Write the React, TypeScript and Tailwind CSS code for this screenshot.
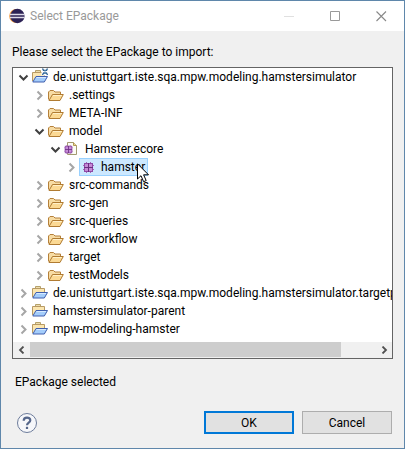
import { useState } from "react";

type IconKind = "javaProject" | "project" | "folder" | "file" | "package";

interface Node {
  label: string;
  level: 0 | 1 | 2 | 3;
  icon: IconKind;
  open?: boolean;
}

const nodes: Node[] = [
  { label: "de.unistuttgart.iste.sqa.mpw.modeling.hamstersimulator", level: 0, icon: "javaProject", open: true },
  { label: ".settings", level: 1, icon: "folder" },
  { label: "META-INF", level: 1, icon: "folder" },
  { label: "model", level: 1, icon: "folder", open: true },
  { label: "Hamster.ecore", level: 2, icon: "file", open: true },
  { label: "hamster", level: 3, icon: "package" },
  { label: "src-commands", level: 1, icon: "folder" },
  { label: "src-gen", level: 1, icon: "folder" },
  { label: "src-queries", level: 1, icon: "folder" },
  { label: "src-workflow", level: 1, icon: "folder" },
  { label: "target", level: 1, icon: "folder" },
  { label: "testModels", level: 1, icon: "folder" },
  { label: "de.unistuttgart.iste.sqa.mpw.modeling.hamstersimulator.targetp", level: 0, icon: "project" },
  { label: "hamstersimulator-parent", level: 0, icon: "project" },
  { label: "mpw-modeling-hamster", level: 0, icon: "project" },
];

const indents = ["pl-0.5", "pl-[18px]", "pl-[34px]", "pl-[50px]"];

function Chevron({ open }: { open?: boolean }) {
  return (
    <svg viewBox="0 0 16 16" className="size-4" fill="none" strokeWidth="2">
      {open ? <path d="M4.5 6.5 8.5 10.5 12.5 6.5" stroke="#404040" /> : <path d="M6.5 4.5 10.5 8.5 6.5 12.5" stroke="#a6a6a6" />}
    </svg>
  );
}

function EcoreGlyph({ x, y }: { x: number; y: number }) {
  return (
    <g transform={`translate(${x} ${y})`}>
      <path d="M3.5 0V11M7.5 0V11M0 3.5H11M0 7.5H11" stroke="#a566ba" />
      <rect x="1.5" y="1.5" width="8" height="8" fill="#c58ad6" stroke="#8f4ba6" />
      <path d="M5.5 1V10M1 5.5H10" stroke="#6b2c80" />
    </g>
  );
}

function NodeIcon({ kind }: { kind: IconKind }) {
  if (kind === "folder") {
    return (
      <svg viewBox="0 0 16 16" className="size-4 shrink-0" fill="none" strokeLinejoin="round">
        <path d="M.5 12.5V5L2 3.5H5.5L7 5H12.5V8" fill="#f7dca4" stroke="#b5803a" />
        <path d="M1 13.5 4.5 7.5H15.3L12 13.5Z" fill="#fbd994" stroke="#b07b32" />
        <path d="M5 8.5H13.8" stroke="#fff0c8" />
      </svg>
    );
  }
  if (kind === "project" || kind === "javaProject") {
    return (
      <svg viewBox="0 0 16 16" className="size-4 shrink-0 overflow-visible" fill="none" strokeLinejoin="round">
        <path d="M3.5 4V1.5H8.5V4" fill="#eddcae" stroke="#b5a16a" />
        <path d="M.5 12V3.5H12.5V8" fill="#fbe6b0" stroke="#b89a64" />
        <path d="M.8 13 4 7.5H15.5L12.3 13Z" fill="#a4cdfb" stroke="#405fae" />
        <path d="M4.6 8.5H14" stroke="#d6eaff" />
        {kind === "javaProject" && (
          <>
            <path d="M9.5-1H16V6.5H9.5Z" fill="#fff" />
            <path d="M10.5-.5 11.5 1.4H14.5L15.5-.5M10.5 6 11.5 4H14.5L15.5 6" stroke="#285f91" strokeWidth="1.3" />
            <path d="M13 1V4.2" stroke="#6c9bc4" />
          </>
        )}
      </svg>
    );
  }
  if (kind === "file") {
    return (
      <svg viewBox="0 0 16 16" className="size-4 shrink-0" fill="none">
        <path d="M3.5 1.5H9.5L12.5 4.5V13.5H3.5Z" fill="#fcfcf5" stroke="#a39a70" />
        <path d="M9.5 1.5V4.5H12.5" fill="#eed796" stroke="#b39853" />
        <g transform="translate(0 4) scale(.82)">
          <EcoreGlyph x={0} y={0} />
        </g>
      </svg>
    );
  }
  return (
    <svg viewBox="0 0 16 16" className="size-4 shrink-0">
      <EcoreGlyph x={3} y={3} />
    </svg>
  );
}

function EclipseLogo() {
  return (
    <svg viewBox="0 0 16 16" className="size-4">
      <circle cx="7.2" cy="8" r="7" fill="#f49a3c" />
      <circle cx="8.4" cy="8" r="7.2" fill="#2c2255" />
      <path d="M1 6.5H15.4M1 9.5H15.4" stroke="#dedbea" strokeWidth="1.6" />
    </svg>
  );
}

function Pointer() {
  return (
    <svg viewBox="0 0 13 20" className="pointer-events-none absolute top-1 left-[57px] z-10 h-5 w-[13px]">
      <path d="M.5.8V16L4 12.7 6.6 18.7 9.2 17.6 6.6 11.8H11.5Z" fill="#fff" stroke="#000" />
    </svg>
  );
}

export default function App() {
  const [selected, setSelected] = useState("hamster");

  return (
    <main className="flex min-h-screen flex-col border border-[#5f87ab] bg-[#f0f0f0] font-['Roboto','Open_Sans',sans-serif] text-xs text-black">
      <header className="flex h-[30px] items-center bg-white pl-2 text-[#999]">
        <EclipseLogo />
        <h1 className="ml-[5px] flex-1">Select EPackage</h1>
        <div className="flex">
          <button aria-label="Minimize" disabled className="flex h-[30px] w-[46px] items-center justify-center">
            <svg viewBox="0 0 11 11" className="size-[11px]"><path d="M0 5.5H10" stroke="#e0e0e0" /></svg>
          </button>
          <button aria-label="Maximize" className="flex h-[30px] w-[46px] items-center justify-center">
            <svg viewBox="0 0 11 11" className="size-[11px]"><path d="M.5.5H9.5V9.5H.5Z" fill="none" stroke="#999" /></svg>
          </button>
          <button aria-label="Close" className="flex h-[30px] w-[46px] items-center justify-center">
            <svg viewBox="0 0 11 11" className="size-[11px]"><path d="M.5.5 10 10M10 .5.5 10" stroke="#888" strokeWidth="1.1" /></svg>
          </button>
        </div>
      </header>

      <section className="flex flex-1 flex-col px-[11px] pt-3">
        <h2 id="tree-label" className="leading-[18px]">Please select the EPackage to import:</h2>

        <div className="mt-1.5 flex flex-1 flex-col border border-[#646464] bg-white">
          <ul role="tree" aria-labelledby="tree-label" className="flex-1 overflow-hidden">
            {nodes.map((node) => (
              <li
                key={node.label}
                role="treeitem"
                aria-level={node.level + 1}
                aria-expanded={!!node.open}
                aria-selected={selected === node.label}
                className={`flex h-[18px] items-center ${indents[node.level]}`}
              >
                <button aria-label={`Toggle ${node.label}`} className="shrink-0">
                  <Chevron open={node.open} />
                </button>
                <button
                  onClick={() => setSelected(node.label)}
                  className={`relative flex h-[18px] items-center gap-[5px] border pr-0.5 leading-4 whitespace-nowrap ${
                    selected === node.label ? "border-[#99d1ff] bg-[#cce8ff]" : "border-transparent"
                  }`}
                >
                  <NodeIcon kind={node.icon} />
                  {node.label}
                  {node.icon === "package" && <Pointer />}
                </button>
              </li>
            ))}
          </ul>
          <div className="flex h-4 bg-[#f0f0f0]">
            <button aria-label="Scroll left" className="flex w-[17px] items-center justify-center">
              <svg viewBox="0 0 8 8" className="size-2"><path d="M5.5.5 2 4 5.5 7.5" fill="none" stroke="#505050" strokeWidth="1.8" /></svg>
            </button>
            <div className="flex-1">
              <div className="h-[15px] w-[90%] bg-[#cdcdcd]" />
            </div>
            <button aria-label="Scroll right" className="flex w-[17px] items-center justify-center">
              <svg viewBox="0 0 8 8" className="size-2"><path d="M2.5.5 6 4 2.5 7.5" fill="none" stroke="#505050" strokeWidth="1.8" /></svg>
            </button>
          </div>
        </div>

        <p className="mt-3.5 pl-[3px] leading-[18px]">EPackage selected</p>
      </section>

      <footer className="flex items-center gap-2 px-3 pt-5 pb-3.5">
        <button aria-label="Help" className="mr-auto pl-[3px]">
          <svg viewBox="0 0 22 22" className="size-[22px]" fill="none">
            <circle cx="11" cy="11" r="9.5" fill="#f6f7fa" stroke="#6d7c9b" />
            <path d="M7.7 8.7C7.7 4.5 14.3 4.7 14.3 8.3C14.3 10.6 11 10.6 11 13.2" stroke="#56678b" strokeWidth="2.2" />
            <path d="M9.9 14.8H12.1V17H9.9Z" fill="#56678b" />
          </svg>
        </button>
        <button className="h-[23px] w-[90px] border-2 border-[#0078d7] bg-[#e1e1e1] leading-4">OK</button>
        <button className="h-[23px] w-[90px] border border-[#adadad] bg-[#e1e1e1] leading-4">Cancel</button>
      </footer>
    </main>
  );
}
